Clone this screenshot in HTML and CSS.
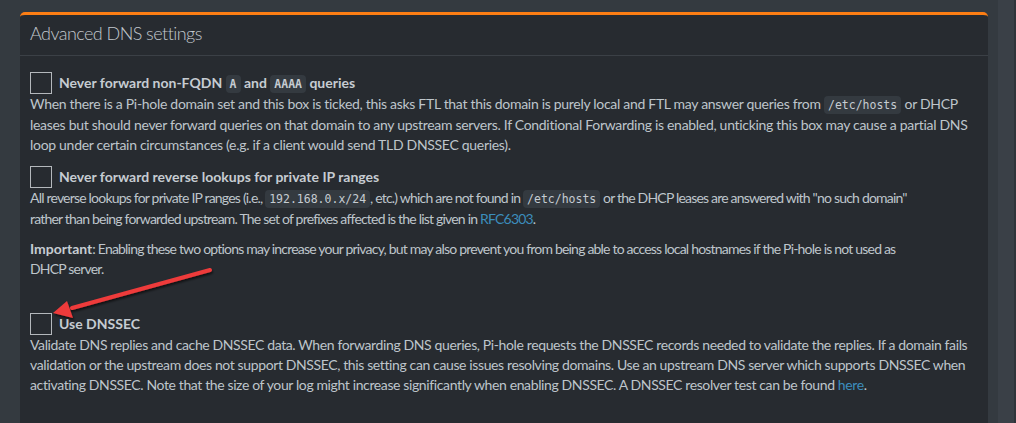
FILE: index.html
```html
<!DOCTYPE html>
<html lang="en">

<head>
    <meta charset="UTF-8">
    <meta name="viewport" content="width=device-width, initial-scale=1.0">
    <title>Advanced DNS settings</title>
    <link rel="stylesheet" href="styles.css">
</head>

<body>
    <div class="page">
        <div class="box">
            <div class="box-header">
                <h3 class="box-title">Advanced DNS settings</h3>
            </div>
            <div class="box-body">
                <div class="option">
                    <label class="check-row">
                        <span class="check"></span>
                        <strong>Never forward non-FQDN <code>A</code> and <code>AAAA</code> queries</strong>
                    </label>
                    <p>When there is a Pi-hole domain set and this box is ticked, this asks FTL that this domain is purely local and FTL may answer queries from <code>/etc/hosts</code> or DHCP leases but should never forward queries on that domain to any upstream servers. If Conditional Forwarding is enabled, unticking this box may cause a partial DNS loop under certain circumstances (e.g. if a client would send TLD DNSSEC queries).</p>
                </div>
                <div class="option narrow">
                    <label class="check-row">
                        <span class="check"></span>
                        <strong>Never forward reverse lookups for private IP ranges</strong>
                    </label>
                    <p>All reverse lookups for private IP ranges (i.e., <code>192.168.0.x/24</code>, etc.) which are not found in <code>/etc/hosts</code> or the DHCP leases are answered with "no such domain" rather than being forwarded upstream. The set of prefixes affected is the list given in <a href="#">RFC6303</a>.</p>
                </div>
                <p class="note narrow"><strong>Important</strong>: Enabling these two options may increase your privacy, but may also prevent you from being able to access local hostnames if the Pi-hole is not used as DHCP server.</p>
                <div class="option dnssec">
                    <label class="check-row">
                        <span class="check"></span>
                        <strong>Use DNSSEC</strong>
                    </label>
                    <p>Validate DNS replies and cache DNSSEC data. When forwarding DNS queries, Pi-hole requests the DNSSEC records needed to validate the replies. If a domain fails validation or the upstream does not support DNSSEC, this setting can cause issues resolving domains. Use an upstream DNS server which supports DNSSEC when activating DNSSEC. Note that the size of your log might increase significantly when enabling DNSSEC. A DNSSEC resolver test can be found <a href="#">here</a>.</p>
                </div>
            </div>
            <!-- red annotation arrow -->
            <svg class="arrow" width="200" height="80" viewBox="0 0 200 80">
                <defs>
                    <filter id="shadow" x="-20%" y="-40%" width="140%" height="180%">
                        <feDropShadow dx="1" dy="2" stdDeviation="1.2" flood-color="#000" flood-opacity="0.6" />
                    </filter>
                </defs>
                <g filter="url(#shadow)">
                    <line x1="190" y1="24" x2="52" y2="62" stroke="#ee3b3b" stroke-width="4" stroke-linecap="round" />
                    <polygon points="33,67 47,55 53,72" fill="#ee3b3b" />
                </g>
            </svg>
        </div>
        <div class="side"></div>
    </div>
</body>

</html>
```

FILE: styles.css
```css
body,
html {
    margin: 0;
    padding: 0;
    height: 100%;
    background-color: #343a40;
    font-family: Lato, 'Liberation Sans', sans-serif;
    font-size: 14px;
    color: #bec5cb;
}

.page {
    display: flex;
    height: 100%;
    padding: 12px 0 0 20px;
    box-sizing: border-box;
}

.box {
    position: relative;
    width: 968px;
    background-color: #272b30;
    border-top: 3px solid #fd7e14;
    border-radius: 5px 5px 0 0;
    overflow: hidden;
}

.side {
    margin-left: 10px;
    flex: 1;
    margin-top: -12px;
    background-color: #3a4047;
    border-right: 2px solid #2f343a;
}

.box-header {
    padding: 7px 10px 11px 10px;
    border-bottom: 1px solid #3b4046;
}

.box-title {
    margin: 0;
    font-size: 18px;
    font-weight: 300;
    line-height: 22px;
    letter-spacing: -0.55px;
    color: #c2c8ce;
}

.box-body {
    padding: 15px 10px 10px 10px;
    letter-spacing: -0.3px;
}

.option {
    margin-bottom: 10px;
}

/* these two blocks are set tighter in the original */
.narrow {
    max-width: 880px;
    letter-spacing: -0.8px;
}

.dnssec {
    letter-spacing: -0.38px;
}

.check-row {
    display: flex;
    align-items: center;
    gap: 7px;
    height: 23px;
}

.check {
    width: 20px;
    height: 20px;
    border: 1px solid #b4b8bc;
    background-color: #272b30;
}

strong {
    font-weight: 700;
    letter-spacing: 0;
    color: #c6ccd2;
}

p {
    margin: 0;
    line-height: 20px;
}

.note {
    margin-bottom: 33px;
}

code {
    font-family: 'DejaVu Sans Mono', monospace;
    font-size: 11.5px;
    letter-spacing: 0;
    background-color: #343a40;
    border-radius: 4px;
    padding: 2px 4px;
    color: #c6ccd2;
}

a {
    color: #3c8dbc;
    text-decoration: none;
}

.arrow {
    position: absolute;
    left: 0;
    top: 231px;
}
```
